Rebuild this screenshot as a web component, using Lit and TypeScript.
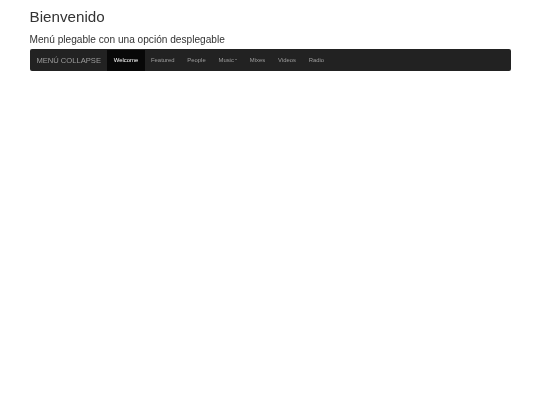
import { LitElement, html, css } from "lit";
import { customElement } from "lit/decorators.js";

@customElement("app-root")
export class AppRoot extends LitElement {
  static styles = css`
    :host { display: block; font-family: "Liberation Sans", Arial, sans-serif; color: #333; }
    .container { padding: 0 29.5px; filter: blur(0.35px); }
    h2 { margin: 0; padding-top: 8px; font-size: 15.2px; font-weight: 400; line-height: 17px; }
    h4 { margin: 0; padding-top: 7.5px; font-size: 10.13px; font-weight: 400; line-height: 13px; }
    nav { display: flex; margin-top: 3.5px; height: 22px; padding: 0.5px; background: #222; border-radius: 2px; box-sizing: border-box; font-size: 5.9px; }
    .brand { padding: 0 6.4px; font-size: 7.6px; line-height: 21px; color: #9d9d9d; }
    ul { display: flex; margin: 0; padding: 0; list-style: none; }
    li { padding: 0 6.4px; line-height: 21px; color: #9d9d9d; }
    li.active { background: #080808; color: #fff; }
    .caret { display: inline-block; width: 0; height: 0; margin-left: 1.2px; vertical-align: middle; border-top: 1.7px solid; border-left: 1.7px solid transparent; border-right: 1.7px solid transparent; }
  `;
  render() {
    return html`<div class="container">
      <h2>Bienvenido</h2>
      <h4>Menú plegable con una opción desplegable</h4>
      <nav>
        <span class="brand">MENÚ COLLAPSE</span>
        <ul>
          <li class="active">Welcome</li>
          <li>Featured</li>
          <li>People</li>
          <li>Music<span class="caret"></span></li>
          <li>Mixes</li>
          <li>Videos</li>
          <li>Radio</li>
        </ul>
      </nav>
    </div>`;
  }
}
